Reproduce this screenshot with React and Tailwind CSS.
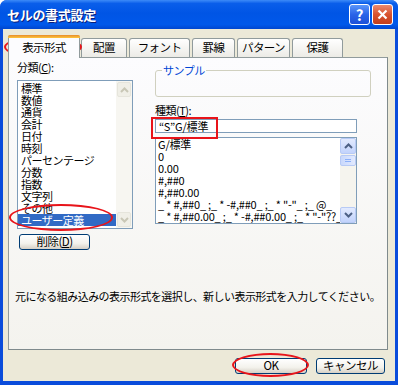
import React from "react";

const F = "font-['Noto_Sans_CJK_JP','Noto_Sans_CJK_SC',sans-serif]";

function Arrow({ up, color }) {
  return (
    <svg width="9" height="6" viewBox="0 0 9 6">
      <path
        d={up ? "M1 5 L4.5 1.5 L8 5" : "M1 1 L4.5 4.5 L8 1"}
        fill="none"
        stroke={color}
        strokeWidth="2"
      />
    </svg>
  );
}

const cats = ["標準", "数値", "通貨", "会計", "日付", "時刻", "パーセンテージ", "分数", "指数", "文字列", "その他", "ユーザー定義"];
const fmts = [
  "G/標準",
  "0",
  "0.00",
  "#,##0",
  "#,##0.00",
  '_ * #,##0_ ;_ * -#,##0_ ;_ * "-"_ ;_ @_ ',
  '_ * #,##0.00_ ;_ * -#,##0.00_ ;_ * "-"??_ ;_ @_ ',
];

function Tab({ label, w }) {
  return (
    <div
      className={`h-[19px] ${w} border border-b-0 border-[#919B9C] rounded-t-[3px] bg-[linear-gradient(to_bottom,#FFFFFF,#ECEBE6)] flex items-center justify-center text-[11.5px] tracking-[-0.6px] text-black`}
    >
      {label}
    </div>
  );
}

function XPButton({ label, w }) {
  return (
    <div
      className={`${w} h-[16px] border border-[#003C74] rounded-[3px] bg-[linear-gradient(to_bottom,#FFFFFF,#F3F2EC_60%,#D6D0C5)] flex items-center justify-center text-[11.5px] tracking-[-0.5px] text-black leading-none`}
    >
      {label}
    </div>
  );
}

export default function App() {
  return (
    <div className={`relative w-[398px] h-[385px] bg-[#0A4CDB] rounded-t-[7px] overflow-hidden flex flex-col ${F}`}>
      {/* title bar */}
      <div className="h-[29px] shrink-0 flex items-center justify-between pl-[7px] pr-[5px] bg-[linear-gradient(to_bottom,#3D8BF8_0%,#0A5EEA_12%,#0055E5_45%,#0058EA_85%,#0046CF_100%)]">
        <span className="text-white font-bold text-[13px] tracking-[-0.3px] leading-none [text-shadow:1px_1px_0_#0A1E7A]">
          セルの書式設定
        </span>
        <div className="flex gap-[2px] items-center">
          <div className="w-[21px] h-[21px] rounded-[3px] border border-white bg-[linear-gradient(to_bottom,#5A96FA,#2A64E8_50%,#1C50D8)] flex items-center justify-center text-white font-bold text-[15px] leading-none">
            ?
          </div>
          <div className="w-[21px] h-[21px] rounded-[3px] border border-white bg-[linear-gradient(to_bottom,#EB8A6E,#D8532F_50%,#C23E1C)] flex items-center justify-center">
            <svg width="11" height="11" viewBox="0 0 11 11">
              <path d="M1.5 1.5 L9.5 9.5 M9.5 1.5 L1.5 9.5" stroke="white" strokeWidth="2.2" />
            </svg>
          </div>
        </div>
      </div>

      {/* body */}
      <div className="flex-1 mx-[3px] mb-[4px] bg-[#ECE9D8] flex flex-col">
        {/* tabs */}
        <div className="mt-[6px] ml-[5px] h-[22px] flex items-end">
          <div className="relative z-10 -mb-px h-[23px] w-[72px] mr-[1px] border-x border-[#919B9C] rounded-t-[3px] bg-[#FCFCFE] flex flex-col">
            <div className="h-[3px] rounded-t-[2px] bg-[linear-gradient(to_bottom,#E68B2C,#FFC73C)] -mx-px" />
            <div className="flex-1 flex items-center justify-center text-[11.5px] tracking-[-0.6px] text-black">表示形式</div>
          </div>
          <div className="flex items-end gap-[2px]">
            <Tab label="配置" w="w-[46px]" />
            <Tab label="フォント" w="w-[61px]" />
            <Tab label="罫線" w="w-[43px]" />
            <Tab label="パターン" w="w-[53px]" />
            <Tab label="保護" w="w-[51px]" />
          </div>
        </div>

        {/* tab page */}
        <div className="ml-[5px] w-[380px] h-[293px] border border-[#919B9C] border-r-[#7F8A8C] border-b-[#7F8A8C] bg-[linear-gradient(to_bottom,#FCFCFE,#F4F3EE)] flex flex-col text-[11px] text-black">
          <div className="flex pl-[8px] pt-[2px]">
            {/* left column */}
            <div className="w-[116px] flex flex-col">
              <div className="h-[14px] leading-[14px] tracking-[-0.5px]">
                分類(<span className="underline">C</span>):
              </div>
              <div className="mt-[6px] h-[149px] border border-[#7F9DB9] bg-white flex">
                <div className="flex-1 pt-px overflow-hidden">
                  {cats.map((c, i) => (
                    <div
                      key={c}
                      className={`h-[12px] leading-[12px] pl-[3px] tracking-[-0.5px] whitespace-nowrap ${
                        i === cats.length - 1 ? "bg-[#316AC5] text-white" : ""
                      }`}
                    >
                      {c}
                    </div>
                  ))}
                </div>
                <div className="w-[16px] bg-[#F7F6F1] flex flex-col justify-between">
                  <div className="h-[15px] m-px border border-[#E6E5DC] rounded-[2px] bg-[#F0EFE7] flex items-center justify-center">
                    <Arrow up color="#C9C7B6" />
                  </div>
                  <div className="h-[15px] m-px border border-[#E6E5DC] rounded-[2px] bg-[#F0EFE7] flex items-center justify-center">
                    <Arrow color="#C9C7B6" />
                  </div>
                </div>
              </div>
              <div className="mt-[5px] ml-[2px]">
                <XPButton label={<span>削除(<span className="underline">D</span>)</span>} w="w-[71px]" />
              </div>
            </div>

            {/* right column */}
            <div className="ml-[22px] w-[216px] flex flex-col">
              <fieldset className="mt-[4px] h-[33px] border border-[#D0D0BF] rounded-[3px]">
                <legend className="ml-[6px] px-[1px] text-[#0046D5] leading-[12px] tracking-[-0.5px]">サンプル</legend>
              </fieldset>
              <div className="mt-[6px] h-[14px] leading-[14px] tracking-[-0.5px]">
                種類(<span className="underline">T</span>):
              </div>
              <div className="mt-[2px] w-[202px] h-[14px] border border-[#7F9DB9] bg-white pl-[3px] leading-[12px] tracking-[-0.2px] whitespace-nowrap">
                “S”G/標準
              </div>
              <div className="mt-[4px] w-[202px] h-[87px] border border-[#7F9DB9] bg-white flex">
                <div className="flex-1 overflow-hidden">
                  {fmts.map((f) => (
                    <div key={f} className="h-[12px] leading-[12px] pl-[2px] tracking-[-0.2px] whitespace-pre">
                      {f}
                    </div>
                  ))}
                </div>
                <div className="w-[16px] bg-[#F5F4EE] flex flex-col">
                  <div className="h-[16px] border border-[#B7CAF5] rounded-[2px] bg-[linear-gradient(to_bottom,#E2EAFE,#C2D3FC)] flex items-center justify-center">
                    <Arrow up color="#4D6185" />
                  </div>
                  <div className="h-[11px] mt-px border border-[#B7CAF5] rounded-[2px] bg-[linear-gradient(to_right,#C9D8FC,#E2EAFE)] flex flex-col items-center justify-center gap-[1px]">
                    <div className="w-[6px] h-px bg-[#8CB0F8]" />
                    <div className="w-[6px] h-px bg-[#8CB0F8]" />
                  </div>
                  <div className="flex-1" />
                  <div className="h-[16px] border border-[#B7CAF5] rounded-[2px] bg-[linear-gradient(to_bottom,#E2EAFE,#C2D3FC)] flex items-center justify-center">
                    <Arrow color="#4D6185" />
                  </div>
                </div>
              </div>
            </div>
          </div>
          <div className="mt-[39px] pl-[6px] h-[14px] leading-[14px] tracking-[-0.55px] whitespace-nowrap">
            元になる組み込みの表示形式を選択し、新しい表示形式を入力してください。
          </div>
        </div>

        {/* buttons */}
        <div className="mt-[8px] flex justify-end gap-[9px] pr-[10px]">
          <XPButton label="OK" w="w-[72px]" />
          <XPButton label="キャンセル" w="w-[69px]" />
        </div>
      </div>

      {/* red annotations */}
      <div className="absolute left-[4px] top-[36px] w-[78px] h-[22px] rounded-[50%] border-2 border-[#E8141A]" />
      <div className="absolute left-[9px] top-[204px] w-[104px] h-[27px] rounded-[50%] border-2 border-[#E8141A]" />
      <div className="absolute left-[232px] top-[353px] w-[77px] h-[24px] rounded-[50%] border-2 border-[#E8141A]" />
      <div className="absolute left-[151px] top-[117px] w-[67px] h-[22px] border-2 border-[#E8141A]" />
    </div>
  );
}
